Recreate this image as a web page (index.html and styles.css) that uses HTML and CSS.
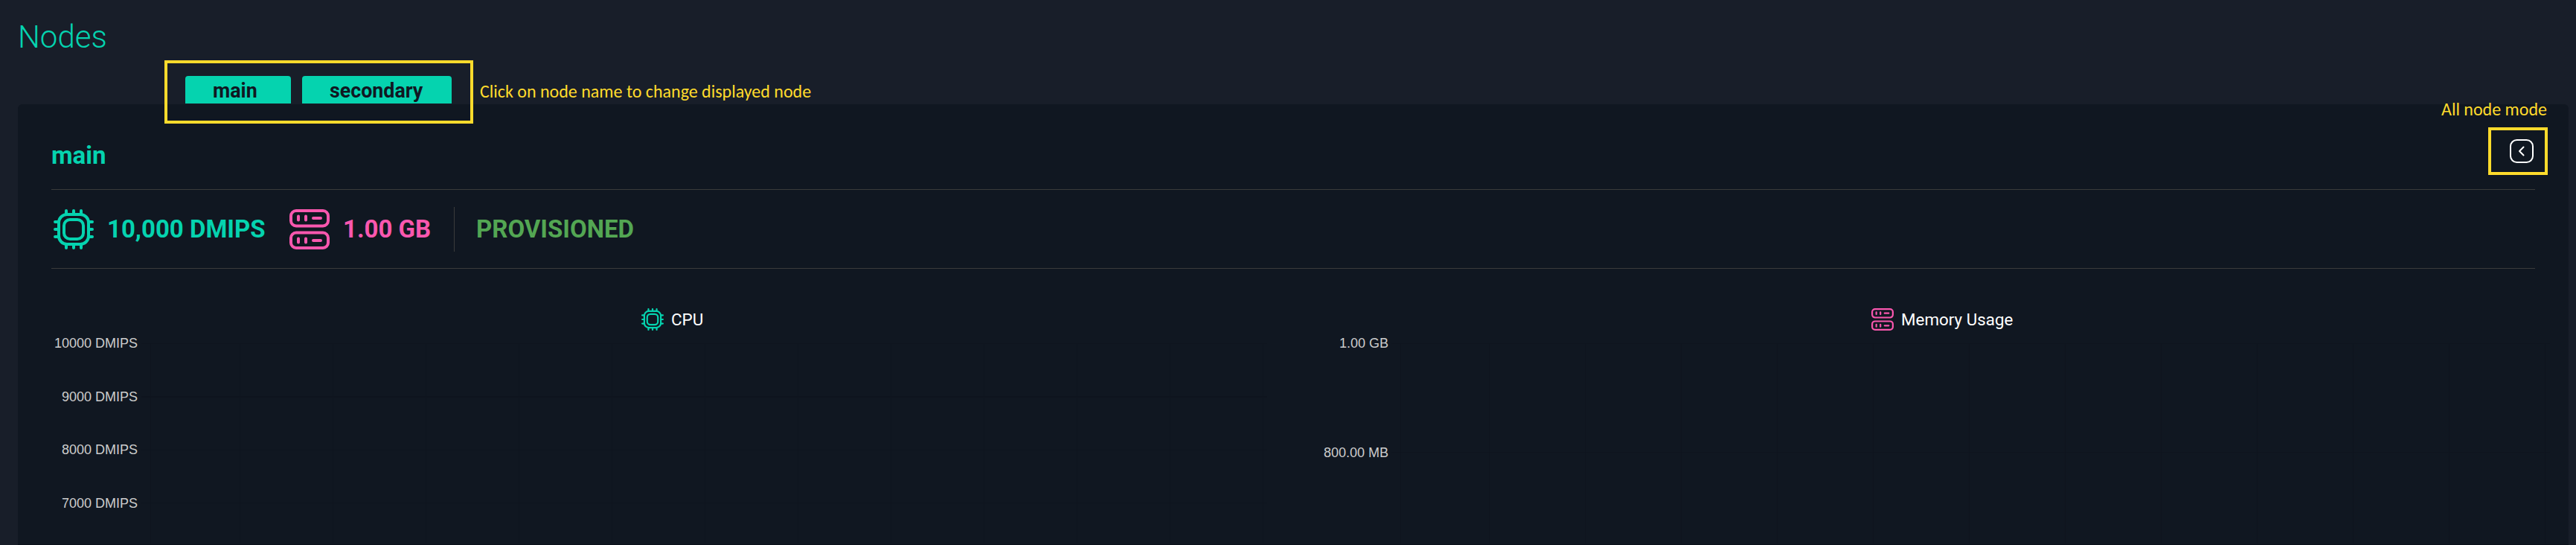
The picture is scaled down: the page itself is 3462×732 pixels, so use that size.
FILE: index.html
```html
<!DOCTYPE html>
<html lang="en">
<head>
<meta charset="utf-8">
<title>Nodes</title>
<link rel="stylesheet" href="styles.css">
</head>
<body>
<svg class="defs" aria-hidden="true">
  <symbol id="cpu" viewBox="0 0 54 54">
    <g fill="none" stroke="currentColor" stroke-width="4" stroke-linecap="round">
      <rect x="7" y="7" width="40" height="40" rx="11"/>
      <rect x="14" y="14" width="26" height="26" rx="8"/>
      <path d="M17 6V2M27 6V2M37 6V2M17 48v4M27 48v4M37 48v4M6 17H2M6 27H2M6 37H2M48 17h4M48 27h4M48 37h4"/>
    </g>
  </symbol>
  <symbol id="memory" viewBox="0 0 54 54">
    <g fill="none" stroke="currentColor" stroke-width="4" stroke-linecap="round">
      <rect x="2" y="2" width="50" height="20.500" rx="7"/>
      <rect x="2" y="31.500" width="50" height="20.500" rx="7"/>
      <path d="M12 9.500v5M22 9.500v5M32 12h10M12 39.500v5M22 39.500v5M32 42h10"/>
    </g>
  </symbol>
</svg>
<header class="page-header"><h1 class="title">Nodes</h1></header>
<nav class="tabs">
  <button class="tab tab-main"><span>main</span></button>
  <button class="tab tab-secondary"><span>secondary</span></button>
</nav>
<main class="panel">
  <div class="panel-head">
    <h2 class="node-name">main</h2>
    <svg class="collapse" viewBox="0 0 32 32" fill="none" stroke="currentColor" stroke-width="2"><rect x="1" y="1" width="30" height="30" rx="8.500"/><path d="M18.500 10.500 13 16l5.500 5.500" stroke-linecap="round" stroke-linejoin="round"/></svg>
  </div>
  <div class="stats">
    <div class="stat cpu"><svg class="icon"><use href="#cpu"/></svg><span class="value v-cpu">10,000 DMIPS</span></div>
    <div class="stat memory"><svg class="icon"><use href="#memory"/></svg><span class="value v-mem">1.00 GB</span></div>
    <div class="stat status"><span class="value">PROVISIONED</span></div>
  </div>
  <div class="charts">
    <section class="chart chart-cpu">
      <h3 class="chart-title"><svg class="icon-small cpu"><use href="#cpu"/></svg><span>CPU</span></h3>
      <div class="plot">
        <div class="axis"><span>10000 DMIPS</span><span>9000 DMIPS</span><span>8000 DMIPS</span><span>7000 DMIPS</span></div>
        <div class="grid"></div>
      </div>
    </section>
    <section class="chart chart-memory">
      <h3 class="chart-title"><svg class="icon-small memory"><use href="#memory"/></svg><span>Memory Usage</span></h3>
      <div class="plot">
        <div class="axis"><span>1.00 GB</span><span>800.00 MB</span></div>
        <div class="grid"></div>
      </div>
    </section>
  </div>
</main>
<div class="callout callout-tabs"></div>
<p class="note note-tabs">Click on node name to change displayed node</p>
<div class="callout callout-mode"></div>
<p class="note note-mode">All node mode</p>
</body>
</html>
```
FILE: styles.css
```css
* { box-sizing: border-box; margin: 0; padding: 0; }
body { position: relative; width: 3462px; height: 732px; overflow: hidden; background: #181e29; font-family: Roboto, sans-serif; color: #fff; }
.defs { position: absolute; width: 0; height: 0; }
.page-header { height: 102px; padding: 25px 0 0 24px; }
.title { font-size: 42px; line-height: 50px; font-weight: 300; color: #05d3af; }
.tabs { display: flex; gap: 15px; height: 38px; padding: 0 0 1px 249px; }
.tab { height: 37px; border: 0; border-radius: 4px 4px 0 0; background: #05d3af; color: #101722; font: 700 26.800px/37px Roboto, sans-serif; text-align: left; }
.tab span { display: block; padding-top: 2px; }
.tab-main { width: 142px; padding-left: 37px; }
.tab-secondary { width: 201px; padding-left: 37px; }
.panel { width: 3428px; height: 592px; margin-left: 24px; padding: 0 45px; border-radius: 6px 6px 0 0; background: #101721; border-bottom: 1px solid #0b101a; }
.panel-head { display: flex; justify-content: space-between; height: 115px; padding: 47px 2px 0 0; border-bottom: 1px solid #3a3b3b; }
.node-name { padding-top: 1px; font-size: 33px; line-height: 42px; font-weight: 700; color: #05d3af; }
.collapse { width: 32px; height: 32px; color: #fff; }
.stats { display: flex; align-items: center; height: 106px; border-bottom: 1px solid #3a3b3b; }
.stat { display: flex; align-items: center; height: 60px; }
.icon { width: 54px; height: 54px; margin: 0 18px 0 3px; }
.value { font-size: 33px; line-height: 40px; font-weight: 700; white-space: nowrap; }
.v-cpu { width: 242px; }
.v-mem { width: 149px; }
.cpu { color: #05d3af; }
.memory { color: #f957ae; }
.status { padding-left: 29px; border-left: 1px solid #3a3b3b; color: #53a653; }
.charts { display: flex; }
.chart { flex: none; width: 1680px; }
.chart-title { display: flex; align-items: center; height: 92px; padding-top: 44px; font-size: 22.400px; font-weight: 400; }
.chart-cpu .chart-title { padding-left: 793px; }
.chart-memory .chart-title { padding-left: 766px; }
.icon-small { width: 30px; height: 30px; margin-right: 10px; }
.plot { display: flex; }
.axis { display: flex; flex-direction: column; width: 116px; margin-top: -2px; text-align: right; font: 18px/20px "Liberation Sans", Arial, sans-serif; color: #ccc; gap: 51.600px; white-space: nowrap; }
.chart-memory .axis { width: 117px; gap: 127px; }
.grid { display: flex; flex: none; height: 269px; margin-top: 8px; }
.grid::before { content: ""; width: 1px; margin-left: 12px; background: #0e141e; }
.grid::after { content: ""; flex: 1; }
.chart-cpu .grid { width: 1513px; margin-left: 5px; background: repeating-linear-gradient(#0e141e 0 1px, transparent 1px 71.500px); }
.chart-cpu .grid::after { margin-left: 119px; background: repeating-linear-gradient(90deg, #0e141e 0 1px, transparent 1px 125px); }
.chart-memory .grid { width: 1557px; margin-left: 4px; background: repeating-linear-gradient(#0e141e 0 1px, transparent 1px 146px); }
.chart-memory .grid::after { margin-left: 118px; background: repeating-linear-gradient(90deg, #0e141e 0 1px, transparent 1px 129px); }
.callout { position: absolute; border: 4px solid #ffdb2c; }
.callout-tabs { left: 221px; top: 81px; width: 415px; height: 85px; }
.callout-mode { left: 3344px; top: 171px; width: 80px; height: 64px; }
.note { position: absolute; font: 24px/28px Carlito, Lato, sans-serif; color: #ffdb2c; white-space: nowrap; }
.note-tabs { left: 645px; top: 109px; }
.note-mode { left: 3281px; top: 133px; }
```
